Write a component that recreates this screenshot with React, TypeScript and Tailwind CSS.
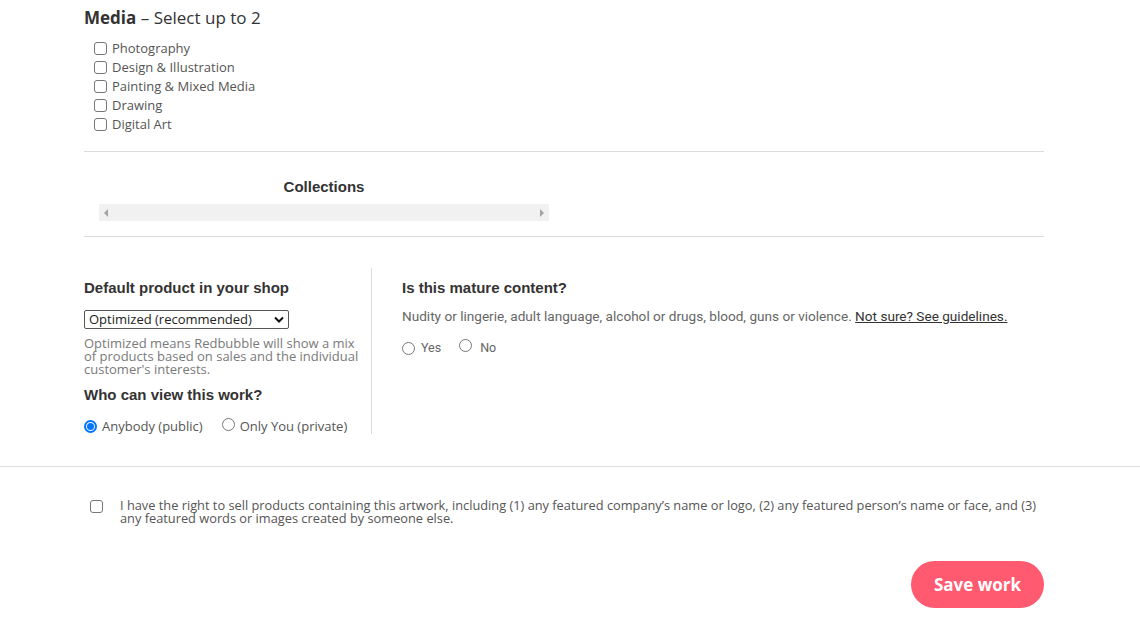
import React from "react";

const mont = { fontFamily: '"Open Sans", "Noto Sans", sans-serif' };

function Box({ className = "" }: { className?: string }) {
  return <span className={`inline-block w-[13px] h-[13px] rounded-[3px] border border-[#767676] bg-white ${className}`} />;
}

function Radio({ checked = false }: { checked?: boolean }) {
  return checked ? (
    <span className="inline-flex w-[13px] h-[13px] rounded-full border-2 border-[#0075ff] items-center justify-center bg-white">
      <span className="w-[7px] h-[7px] rounded-full bg-[#0075ff]" />
    </span>
  ) : (
    <span className="inline-block w-[13px] h-[13px] rounded-full border border-[#767676] bg-white" />
  );
}

export default function App() {
  const media = ["Photography", "Design & Illustration", "Painting & Mixed Media", "Drawing", "Digital Art"];
  return (
    <div className="w-[1140px] h-[629px] bg-white overflow-hidden text-[#333]" style={{ fontFamily: '"Liberation Sans", Arial, sans-serif' }}>
      <div className="w-[960px] ml-[84px]">
        <div className="pt-[7px] text-[17px] leading-[22px] text-[#333]" style={mont}>
          <span className="font-bold">Media</span> – Select up to 2
        </div>
        <div className="pl-[10px] pt-[10px] flex flex-col">
          {media.map((m) => (
            <div key={m} className="flex items-center h-[19px] gap-[5px]">
              <Box />
              <span className="text-[13px] text-[#555] leading-[19px]" style={mont}>{m}</span>
            </div>
          ))}
        </div>
        <div className="mt-[17px] border-t border-[#dcdcdc]" />
        <div className="h-[84px] flex flex-col">
          <div className="w-[480px] text-center font-bold text-[15px] mt-[26px] leading-[17px] text-[#333]">Collections</div>
          <div className="ml-[15px] mt-[9px] w-[450px] h-[17px] bg-[#f1f1f1] flex items-center justify-between px-[5px]">
            <span className="w-0 h-0 border-y-[4px] border-y-transparent border-r-[4px] border-r-[#a3a3a3]" />
            <span className="w-0 h-0 border-y-[4px] border-y-transparent border-l-[4px] border-l-[#a3a3a3]" />
          </div>
        </div>
        <div className="border-t border-[#dcdcdc]" />
        <div className="flex mt-[31px]">
          <div className="w-[288px] border-r border-[#dcdcdc] pr-[10px] h-[166px]">
            <div className="font-bold text-[15px] leading-[17px] mt-[11px] text-[#333]">Default product in your shop</div>
            <div className="mt-[14px] w-[205px] h-[19px] border border-[#555] rounded-[2px] flex items-center justify-between pl-[4px] pr-[4px]">
              <span className="text-[13px] text-[#222]" style={mont}>Optimized (recommended)</span>
              <svg width="10" height="7" viewBox="0 0 10 7"><path d="M1 1.5 L5 5.5 L9 1.5" stroke="#111" strokeWidth="2" fill="none" /></svg>
            </div>
            <div className="mt-[8px] w-[276px] text-[13px] leading-[13px] text-[#7a7a7a]" style={mont}>
              Optimized means Redbubble will show a mix of products based on sales and the individual customer's interests.
            </div>
            <div className="font-bold text-[15px] leading-[17px] mt-[10px] text-[#333]">Who can view this work?</div>
            <div className="flex items-center mt-[14px] text-[13px] text-[#555]" style={mont}>
              <Radio checked />
              <span className="ml-[5px]">Anybody (public)</span>
              <span className="ml-[19px]"><Radio /></span>
              <span className="ml-[5px]">Only You (private)</span>
            </div>
          </div>
          <div className="pl-[30px] flex-1">
            <div className="font-bold text-[15px] leading-[17px] mt-[11px] text-[#333]">Is this mature content?</div>
            <div className="mt-[13px] text-[13.6px] leading-[15px] text-[#666]" style={{ fontFamily: 'Roboto, sans-serif' }}>
              Nudity or lingerie, adult language, alcohol or drugs, blood, guns or violence.{" "}
              <span className="underline text-[#333]">Not sure? See guidelines.</span>
            </div>
            <div className="flex items-center mt-[15px] text-[12.5px] text-[#666]" style={{ fontFamily: 'Roboto, sans-serif' }}>
              <Radio />
              <span className="ml-[6px]">Yes</span>
              <span className="ml-[18px]"><Radio /></span>
              <span className="ml-[8px]">No</span>
            </div>
          </div>
        </div>
      </div>
      <div className="mt-[32px] border-t border-[#dcdcdc]" />
      <div className="flex ml-[90px] mt-[32px] w-[952px]">
        <Box className="mt-[1px] shrink-0" />
        <div className="ml-[17px] text-[12.8px] leading-[13px] text-[#555]" style={mont}>
          I have the right to sell products containing this artwork, including (1) any featured company’s name or logo, (2) any featured person’s name or face, and (3) any featured words or images created by someone else.
        </div>
      </div>
      <div className="flex justify-end w-[1044px] mt-[36px]">
        <button className="w-[133px] h-[47px] rounded-full bg-[#ff5a6f] text-white font-bold text-[17px]" style={mont}>Save work</button>
      </div>
    </div>
  );
}
